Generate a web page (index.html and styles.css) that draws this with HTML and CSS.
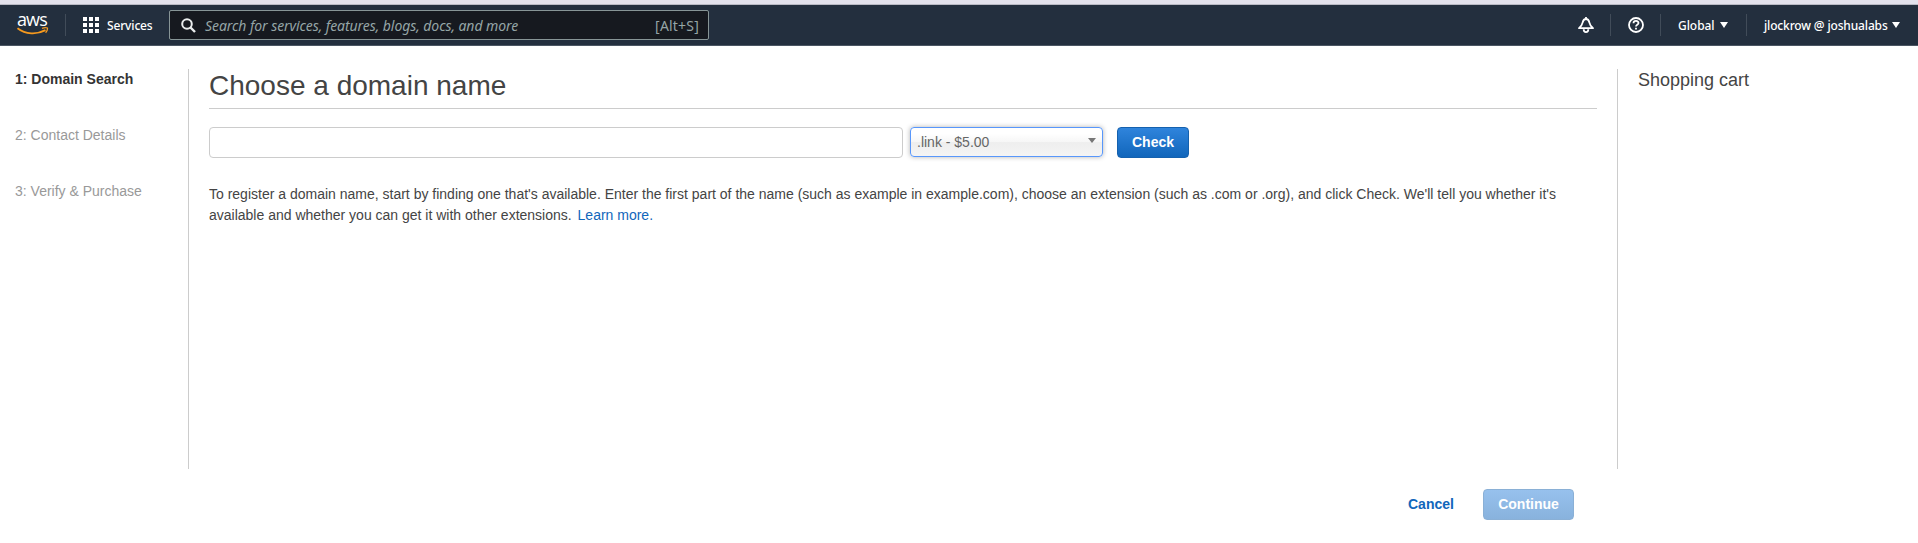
FILE: index.html
```html
<!DOCTYPE html>
<html lang="en">
<head>
<meta charset="utf-8">
<title>Choose a domain name</title>
<link rel="stylesheet" href="styles.css">
</head>
<body>
<div class="strip"></div>
<header class="nav">
  <div class="logo">
    <span class="logo-text">aws</span>
    <svg class="smile" width="32" height="9" viewBox="0 0 32 9" fill="none" stroke="#f79a1e"><path d="M.5 1.200C8.500 7.600 20 7.800 28.500 3.200" stroke-width="1.900"/><path d="M25 1.400C27.500.500 29.500.600 30.400 1C30.700 2.400 29.900 4.300 28.600 5.700" stroke-width="1.300"/></svg>
  </div>
  <div class="services">
    <svg width="17" height="17" viewBox="0 0 17 17" fill="#fff"><path d="M0 0h4v4H0zM6 0h4v4H6zM12 0h4v4h-4zM0 6h4v4H0zM6 6h4v4H6zM12 6h4v4h-4zM0 12h4v4H0zM6 12h4v4H6zM12 12h4v4h-4z"/></svg>
    <span class="services-text">Services</span>
  </div>
  <div class="search">
    <svg width="15" height="15" viewBox="0 0 15 15" fill="none" stroke="#eaeded" stroke-width="2"><circle cx="6" cy="6" r="4.800"/><path d="M9.500 9.500L14 14" stroke-width="2.400"/></svg>
    <span class="placeholder">Search for services, features, blogs, docs, and more</span>
    <span class="shortcut">[Alt+S]</span>
  </div>
  <div class="nav-right">
    <div class="cell bell"><svg width="16" height="16" viewBox="0 0 16 16" fill="none" stroke="#fff" stroke-width="1.800"><path d="M8 0v2M1 11.200C3.200 9.500 4 8.300 4.600 5.600C5.100 3.200 6.200 2 8 2S10.900 3.200 11.400 5.600C12 8.300 12.800 9.500 15 11.200z" stroke-linejoin="round"/><path d="M5.700 12.200C5.700 16 10.300 16 10.300 12.200"/></svg></div>
    <div class="cell help"><svg width="16" height="16" viewBox="0 0 16 16" fill="none" stroke="#fff" stroke-width="1.800"><circle cx="8" cy="8" r="7"/><path d="M5.500 6.300C5.500 3.200 10.500 3.300 10.500 6C10.500 7.800 8 7.700 8 9.500M8 10.700v1.700"/></svg></div>
    <div class="cell region"><span class="global">Global</span><i class="tri"></i></div>
    <div class="cell user"><span class="username">jlockrow @ joshualabs</span><i class="tri"></i></div>
  </div>
</header>
<div class="body">
  <nav class="steps">
    <div class="step active">1: Domain Search</div>
    <div class="step">2: Contact Details</div>
    <div class="step">3: Verify &amp; Purchase</div>
  </nav>
  <main class="main">
    <h1 class="title">Choose a domain name</h1>
    <div class="form">
      <input class="domain" type="text" aria-label="Domain name">
      <div class="select"><span>.link - $5.00</span><i class="arrow"></i></div>
      <button class="btn check">Check</button>
    </div>
    <p class="info">To register a domain name, start by finding one that's available. Enter the first part of the name (such as example in example.com), choose an extension (such as .com or .org), and click Check. We'll tell you whether it's<br>available and whether you can get it with other extensions. <a class="learn">Learn more.</a></p>
  </main>
  <aside class="cart"><span class="cart-title">Shopping cart</span></aside>
</div>
<footer class="footer">
  <a class="cancel">Cancel</a>
  <button class="btn continue">Continue</button>
</footer>
</body>
</html>
```
FILE: styles.css
```css
* { box-sizing: border-box; }
body { margin: 0; height: 543px; overflow: hidden; background: #fff; color: #444; font: 14px/21px "Liberation Sans", Arial, sans-serif; }
svg { display: block; flex: none; }
.strip { height: 5px; background: #e3e2ec; border-bottom: 1px solid #b9bac4; }
.nav { height: 41px; background: #232f3e; border-bottom: 1px solid #4b5663; display: flex; align-items: center; color: #fff; font-family: "Noto Sans", sans-serif; white-space: nowrap; }
.logo { width: 66px; height: 22px; padding-left: 17px; border-right: 1px solid #414c59; }
.logo-text { display: block; height: 14px; font: 500 18px/14px "Open Sans", sans-serif; letter-spacing: -.9px; margin-top: -2px; }
.smile { margin-top: 1px; }
.services { width: 103px; padding-left: 17px; display: flex; align-items: center; gap: 7px; }
.services-text { font-size: 12px; font-weight: 500; letter-spacing: -.15px; }
.search { width: 540px; height: 30px; border: 1px solid #879596; border-radius: 2px; background: #16191f; display: flex; align-items: center; padding: 0 9px 0 11px; color: #95a5a6; }
.placeholder { margin-left: 9px; font-size: 14px; font-style: italic; letter-spacing: -.07px; }
.shortcut { margin-left: auto; font-size: 14px; letter-spacing: .2px; }
.nav-right { margin-left: auto; display: flex; font-size: 12px; font-weight: 500; }
.cell { height: 22px; display: flex; align-items: center; }
.cell + .cell { border-left: 1px solid #414c59; }
.bell { width: 32px; }
.help { width: 50px; padding-left: 17px; }
.region { width: 86px; padding-left: 17px; }
.user { width: 172px; padding-left: 17px; }
.global { width: 42px; letter-spacing: -.05px; }
.username { width: 128px; letter-spacing: -.15px; }
.tri { border: 4px solid transparent; border-top: 6px solid #fff; border-bottom: 0; }
.body { display: flex; height: 400px; margin-top: 23px; }
.steps { width: 188px; padding-left: 15px; color: #999; }
.step { height: 56px; }
.active { color: #333; font-weight: bold; }
.main { width: 1430px; border: solid #ccc; border-width: 0 1px; padding: 0 20px; }
.title { margin: 0 0 18px; height: 40px; border-bottom: 1px solid #ccc; font-size: 28px; font-weight: normal; line-height: 34px; }
.form { display: flex; height: 31px; }
.domain { width: 694px; height: 31px; border: 1px solid #ccc; border-radius: 4px; margin: 0 7px 0 0; }
.select { width: 193px; height: 30px; border: 1px solid #5897fb; border-radius: 4px; background: linear-gradient(#fff 20%, #f6f6f6 50%, #eee 52%, #f4f4f4 100%); box-shadow: 0 0 5px rgba(0,0,0,.3); display: flex; align-items: center; justify-content: space-between; padding: 0 6px; margin-right: 14px; color: #666; }
.arrow { border: 4px solid transparent; border-top: 5px solid #777; border-bottom: 0; margin-top: -4px; }
.btn { height: 31px; border: 1px solid #1561ae; border-radius: 4px; padding: 0; color: #fff; font: bold 14px/21px "Liberation Sans", Arial, sans-serif; }
.check { width: 72px; background: linear-gradient(#2f84dc, #1166bb); }
.info { margin: 26px 0 0; white-space: nowrap; }
.learn { color: #1166bb; margin-left: 2px; }
.cart { padding-left: 20px; }
.cart-title { font-size: 18px; line-height: 23px; }
.footer { display: flex; align-items: center; justify-content: flex-end; padding-right: 344px; margin-top: 20px; }
.cancel { width: 75px; color: #1166bb; font-weight: bold; }
.continue { width: 91px; background: linear-gradient(#97c1ed, #88b2dd); border-color: #8ab0d6; }
```
